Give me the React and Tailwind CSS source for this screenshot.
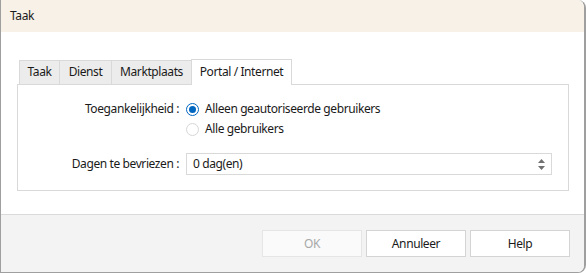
import { useState } from 'react';

const tabs = [
  { label: 'Taak', w: 'w-[41px]' },
  { label: 'Dienst', w: 'w-[53px]' },
  { label: 'Marktplaats', w: 'w-[81px]' },
  { label: 'Portal / Internet', w: 'w-[101px]' },
];

// Windows-achtige radio knop
function Radio({ checked, disabled, label }) {
  return (
    <label className="flex items-center h-[20px] gap-[6px]">
      <span
        className={`w-[13px] h-[13px] rounded-full border flex items-center justify-center ${
          checked ? 'border-[#0067c0]' : 'border-[#d6d6d6]'
        } ${disabled ? 'bg-white' : ''}`}
      >
        {checked && <span className="w-[7px] h-[7px] rounded-full bg-[#0067c0]" />}
      </span>
      <span className="text-[#1a1a1a]">{label}</span>
    </label>
  );
}

export default function App() {
  const [active, setActive] = useState(3);

  return (
    <div
      className="w-[586px] h-[273px] bg-white overflow-hidden text-[12px] tracking-[-0.4px] text-[#1a1a1a]"
      style={{ fontFamily: '"Noto Sans", "Segoe UI", sans-serif' }}
    >
      <div className="h-full flex flex-col border-l border-b border-r-2 border-[#9f9f9f] rounded-tr-[8px] rounded-br-[8px] overflow-hidden">
        {/* Titelbalk */}
        <div className="h-[32px] shrink-0 bg-[#f8f1e8] flex items-center pl-[9px]">
          Taak
        </div>

        {/* Inhoud */}
        <div className="flex-1 bg-white pt-[26px] pl-[16px] pr-[15px]">
          <div className="flex items-end pl-[2px] h-[26px]">
            {tabs.map((t, i) => (
              <button
                key={t.label}
                onClick={() => setActive(i)}
                className={`${t.w} border border-b-0 border-[#d9d9d9] -ml-px first:ml-0 flex items-center justify-center ${
                  i === active
                    ? 'h-[26px] bg-white relative z-10 mb-[-1px] pb-[2px]'
                    : 'h-[24px] bg-[#ececec] pb-[1px]'
                }`}
              >
                {t.label}
              </button>
            ))}
          </div>
          <div className="border border-[#d9d9d9] h-[107px] pt-[14px]">
            <div className="flex">
              <div className="w-[162px] text-right pr-[1px] h-[20px] leading-[20px]">Toegankelijkheid :</div>
              <div className="pl-[6px] flex flex-col">
                <Radio checked label="Alleen geautoriseerde gebruikers" />
                <Radio disabled label="Alle gebruikers" />
              </div>
            </div>
            <div className="flex items-center mt-[14px]">
              <div className="w-[162px] text-right pr-[1px]">Dagen te bevriezen :</div>
              <div className="ml-[6px] w-[366px] h-[22px] border border-[#d9d9d9] flex items-center pl-[6px] pr-[4px]">
                <span className="flex-1">0 dag(en)</span>
                <span className="flex flex-col items-center gap-[3px] mr-[2px]">
                  <svg width="7" height="4" viewBox="0 0 7 4">
                    <path d="M3.5 0 L7 4 L0 4 Z" fill="#707070" />
                  </svg>
                  <svg width="7" height="4" viewBox="0 0 7 4">
                    <path d="M0 0 L7 0 L3.5 4 Z" fill="#707070" />
                  </svg>
                </span>
              </div>
            </div>
          </div>
        </div>

        {/* Knoppenbalk */}
        <div className="h-[58px] shrink-0 bg-[#f3f3f3] border-t border-[#dadada] flex items-start justify-end gap-[4px] pt-[15px] pr-[14px]">
          <button className="w-[100px] h-[27px] border border-[#e5e5e5] bg-[#fafafa] text-[#a8a8a8]">OK</button>
          <button className="w-[100px] h-[27px] border border-[#d4d4d4] bg-white">Annuleer</button>
          <button className="w-[100px] h-[27px] border border-[#d4d4d4] bg-white">Help</button>
        </div>
      </div>
    </div>
  );
}
